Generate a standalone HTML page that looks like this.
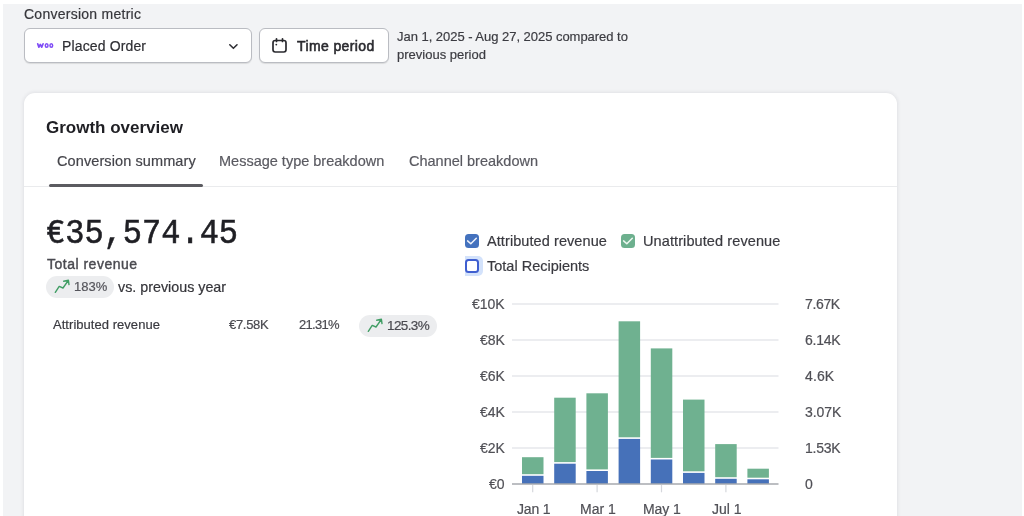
<!DOCTYPE html>
<html>
<head>
<meta charset="utf-8">
<title>Growth overview</title>
<style>
*{box-sizing:border-box;margin:0;padding:0}
html,body{width:1024px;height:516px;overflow:hidden;background:#fff;font-family:"Liberation Sans",sans-serif;}
#bg{position:absolute;left:3px;top:4px;width:1019px;height:512px;background:#f2f3f5;}
.t{position:absolute;white-space:nowrap;line-height:20px;color:#2c2c31;will-change:transform;-webkit-text-stroke:0.2px;}
#card{position:absolute;left:24px;top:93px;width:872.6px;height:440px;background:#fff;border-radius:11px;box-shadow:0 0 4px rgba(30,35,50,.12);}
.box{position:absolute;background:#fff;border:1px solid #babcc2;border-radius:6px;box-shadow:0 1px 1px rgba(0,0,0,.10);}
.pill{position:absolute;background:#ecedef;border-radius:12px;}
svg{position:absolute;overflow:visible}
</style>
</head>
<body>
<div id="bg"></div>

<!-- top controls -->
<div class="t" id="lblMetric" style="left:24px;top:4px;font-size:14px;letter-spacing:0.26px;color:#36363b;">Conversion metric</div>
<div class="box" id="sel" style="left:24px;top:27.7px;width:228px;height:35.4px;"></div>
<svg id="woo" style="left:36px;top:42px" width="18" height="7" viewBox="36 42 18 7"><g fill="none" stroke="#7f4cf6" stroke-linecap="round" stroke-linejoin="round"><path d="M37.7 43.8 L38.9 47.2 L40.3 44.4 L41.7 47.2 L43.1 43.8" stroke-width="1.7"/><ellipse cx="46.65" cy="45.5" rx="1.35" ry="1.75" stroke-width="1.5"/><ellipse cx="51.3" cy="45.5" rx="1.35" ry="1.75" stroke-width="1.5"/></g></svg>
<div class="t" id="placed" style="left:62px;top:36px;font-size:14px;letter-spacing:0.14px;color:#2f2f34;">Placed Order</div>
<svg id="chev" style="left:228px;top:43px" width="10" height="6" viewBox="0 0 10 6"><path d="M1.8 1.8 L5.4 5.3 L9 1.8" fill="none" stroke="#2f2f34" stroke-width="1.6" stroke-linecap="round" stroke-linejoin="round"/></svg>

<div class="box" id="btn" style="left:259px;top:27.7px;width:130px;height:35.4px;"></div>
<svg id="cal" style="left:272px;top:38px" width="15" height="15" viewBox="0 0 15 15"><rect x="1" y="2.5" width="13" height="11.5" rx="2.2" fill="none" stroke="#2a2a2f" stroke-width="1.7"/><path d="M4.5 0.8 V3.4 M10.5 0.8 V3.4" stroke="#2a2a2f" stroke-width="1.7" stroke-linecap="round"/><circle cx="4.3" cy="6.6" r="0.9" fill="#2a2a2f"/></svg>
<div class="t" id="tp" style="left:296.5px;top:36px;font-size:14px;letter-spacing:0.38px;-webkit-text-stroke:0.55px #2a2a2f;color:#2a2a2f;">Time period</div>
<div class="t" id="d1" style="left:396.6px;top:27px;font-size:13px;letter-spacing:-0.03px;color:#3c3c42;">Jan 1, 2025 - Aug 27, 2025 compared to</div>
<div class="t" id="d2" style="left:396.6px;top:45px;font-size:13px;color:#3c3c42;">previous period</div>

<!-- card -->
<div id="card"></div>
<div class="t" id="title" style="left:46px;top:118.3px;-webkit-text-stroke:0;font-size:17px;font-weight:bold;color:#1f1f24;">Growth overview</div>
<div class="t" id="tab1" style="left:57.3px;top:151px;font-size:14.5px;letter-spacing:0.1px;color:#45454b;">Conversion summary</div>
<div class="t" id="tab2" style="left:219px;top:151px;font-size:14.5px;color:#5a5a61;">Message type breakdown</div>
<div class="t" id="tab3" style="left:409px;top:151px;font-size:14.5px;color:#5a5a61;">Channel breakdown</div>
<div id="divider" style="position:absolute;left:24px;top:186px;width:873px;height:1px;background:#eaebed;"></div>
<div id="uline" style="position:absolute;left:49px;top:183.5px;width:154px;height:3.5px;background:#5b5b60;border-radius:2px;"></div>

<!-- left summary -->
<div class="t" id="big" style="left:46px;top:215.5px;transform:scaleY(1.114);transform-origin:left bottom;font-family:'Liberation Mono',monospace;font-size:32px;line-height:40px;color:#1f1f24;-webkit-text-stroke:0.5px #1f1f24;">€35,574.45</div>
<div class="t" id="totrev" style="left:46.5px;top:254.3px;font-size:14px;letter-spacing:0.5px;-webkit-text-stroke:0.4px #4a4a50;color:#4a4a50;">Total revenue</div>
<div class="pill" id="p1" style="left:46px;top:276px;width:68px;height:22px;"></div>
<svg id="a1" style="left:54px;top:280px" width="15" height="13" viewBox="0 0 15 13"><path d="M1.3 12.3 L5.2 6.4 L9 8 L14.2 0.7 M9.7 1.2 L14.4 0.3 L15 4.6" fill="none" stroke="#3f9d63" stroke-width="1.4" stroke-linecap="round" stroke-linejoin="round"/></svg>
<div class="t" id="pct1" style="left:74px;top:277px;font-size:13px;color:#55555b;">183%</div>
<div class="t" id="vs" style="left:118px;top:277px;font-size:14.3px;color:#35353a;">vs. previous year</div>

<div class="t" id="attr" style="left:53.2px;top:314.6px;font-size:13px;letter-spacing:0.04px;color:#3a3a40;">Attributed revenue</div>
<div class="t" id="v1" style="left:229px;top:314.5px;font-size:13px;letter-spacing:-0.3px;color:#4a4a50;">€7.58K</div>
<div class="t" id="v2" style="left:299px;top:314.5px;font-size:13px;letter-spacing:-0.7px;color:#4a4a50;">21.31%</div>
<div class="pill" id="p2" style="left:359px;top:315px;width:77.5px;height:21.5px;"></div>
<svg id="a2" style="left:367px;top:319px" width="15" height="13" viewBox="0 0 15 13"><path d="M1.3 12.3 L5.2 6.4 L9 8 L14.2 0.7 M9.7 1.2 L14.4 0.3 L15 4.6" fill="none" stroke="#3f9d63" stroke-width="1.4" stroke-linecap="round" stroke-linejoin="round"/></svg>
<div class="t" id="pct2" style="left:387px;top:316px;font-size:13.5px;letter-spacing:-0.6px;color:#4a4a50;">125.3%</div>

<!-- legend -->
<div id="cb1" style="position:absolute;left:465px;top:234px;width:14px;height:14px;border-radius:3.5px;background:#4472be;"></div>
<svg id="ck1" style="left:465px;top:234px" width="14" height="14" viewBox="0 0 14 14"><path d="M2.6 6.9 L5.8 9.8 L11.3 4.2" fill="none" stroke="#eef2fb" stroke-width="1.5" stroke-linecap="round" stroke-linejoin="round"/></svg>
<div class="t" id="lg1" style="left:487px;top:231px;font-size:14.5px;letter-spacing:0.08px;color:#3a3a40;">Attributed revenue</div>
<div id="cb2" style="position:absolute;left:621px;top:234px;width:14px;height:14px;border-radius:3.5px;background:#6db08e;"></div>
<svg id="ck2" style="left:621px;top:234px" width="14" height="14" viewBox="0 0 14 14"><path d="M2.6 6.9 L5.8 9.8 L11.3 4.2" fill="none" stroke="#eef7f1" stroke-width="1.5" stroke-linecap="round" stroke-linejoin="round"/></svg>
<div class="t" id="lg2" style="left:642.6px;top:231px;font-size:14.5px;letter-spacing:0.1px;color:#3a3a40;">Unattributed revenue</div>
<div id="halo" style="position:absolute;left:465px;top:256px;width:18px;height:20px;background:#d3e2fb;border-radius:0 5px 5px 0;"></div>
<div id="cb3" style="position:absolute;left:465px;top:259px;width:14px;height:14px;border-radius:3.5px;background:#fff;border:2px solid #3f5fd0;"></div>
<div class="t" id="lg3" style="left:487px;top:256px;font-size:14.5px;color:#3a3a40;">Total Recipients</div>

<!-- chart -->
<svg id="chart" style="left:0;top:0" width="1024" height="516" viewBox="0 0 1024 516">
  <g stroke="#dadce1" stroke-width="1.1">
    <line x1="512" x2="778.5" y1="304" y2="304"/>
    <line x1="512" x2="778.5" y1="340" y2="340"/>
    <line x1="512" x2="778.5" y1="376" y2="376"/>
    <line x1="512" x2="778.5" y1="412" y2="412"/>
    <line x1="512" x2="778.5" y1="448" y2="448"/>
  </g>
  <g fill="#6fb190">
    <rect x="522" y="457.2" width="21.5" height="17.0"/>
    <rect x="554.2" y="397.7" width="21.5" height="64.4"/>
    <rect x="586.4" y="393.3" width="21.5" height="76.1"/>
    <rect x="618.6" y="321.3" width="21.5" height="116.0"/>
    <rect x="650.8" y="348.4" width="21.5" height="109.5"/>
    <rect x="683" y="399.6" width="21.5" height="71.7"/>
    <rect x="715.2" y="444.1" width="21.5" height="33.1"/>
    <rect x="747.4" y="468.7" width="21.5" height="9.0"/>
  </g>
  <g fill="#4671b9">
    <rect x="522" y="475.8" width="21.5" height="8.2"/>
    <rect x="554.2" y="463.7" width="21.5" height="20.3"/>
    <rect x="586.4" y="471.0" width="21.5" height="13.0"/>
    <rect x="618.6" y="438.9" width="21.5" height="45.1"/>
    <rect x="650.8" y="459.5" width="21.5" height="24.5"/>
    <rect x="683" y="472.9" width="21.5" height="11.1"/>
    <rect x="715.2" y="478.8" width="21.5" height="5.2"/>
    <rect x="747.4" y="479.3" width="21.5" height="4.7"/>
  </g>
  <line x1="512" x2="778.5" y1="484" y2="484" stroke="#a6a8ae" stroke-width="1.6"/>
  <g stroke="#d5d7dc" stroke-width="1.2">
    <line x1="532.7" x2="532.7" y1="485" y2="492.3"/>
    <line x1="597.1" x2="597.1" y1="485" y2="492.3"/>
    <line x1="661.5" x2="661.5" y1="485" y2="492.3"/>
    <line x1="725.9" x2="725.9" y1="485" y2="492.3"/>
  </g>
</svg>
<div class="t ax" id="y1" style="right:519px;top:294px;font-size:14px;color:#505056;">€10K</div>
<div class="t ax" id="y2" style="right:519px;top:330px;font-size:14px;color:#505056;">€8K</div>
<div class="t ax" id="y3" style="right:519px;top:366px;font-size:14px;color:#505056;">€6K</div>
<div class="t ax" id="y4" style="right:519px;top:402px;font-size:14px;color:#505056;">€4K</div>
<div class="t ax" id="y5" style="right:519px;top:438px;font-size:14px;color:#505056;">€2K</div>
<div class="t ax" id="y6" style="right:519px;top:474px;font-size:14px;color:#505056;">€0</div>
<div class="t" id="r1" style="left:805px;top:294px;font-size:14px;letter-spacing:-0.35px;color:#505056;">7.67K</div>
<div class="t" id="r2" style="left:805px;top:330px;font-size:14px;letter-spacing:-0.22px;color:#505056;">6.14K</div>
<div class="t" id="r3" style="left:805px;top:366px;font-size:14px;letter-spacing:0.1px;color:#505056;">4.6K</div>
<div class="t" id="r4" style="left:805px;top:402px;font-size:14px;letter-spacing:-0.04px;color:#505056;">3.07K</div>
<div class="t" id="r5" style="left:805px;top:438px;font-size:14px;letter-spacing:-0.22px;color:#505056;">1.53K</div>
<div class="t" id="r6" style="left:805px;top:474px;font-size:14px;letter-spacing:0px;color:#505056;">0</div>
<div class="t" id="x1" style="left:517px;top:499px;font-size:14px;letter-spacing:-0.2px;color:#505056;">Jan 1</div>
<div class="t" id="x2" style="left:579.5px;top:499px;font-size:14px;color:#505056;">Mar 1</div>
<div class="t" id="x3" style="left:643px;top:499px;font-size:14px;letter-spacing:-0.1px;color:#505056;">May 1</div>
<div class="t" id="x4" style="left:711.5px;top:499px;font-size:14px;color:#505056;">Jul 1</div>
</body>
</html>
